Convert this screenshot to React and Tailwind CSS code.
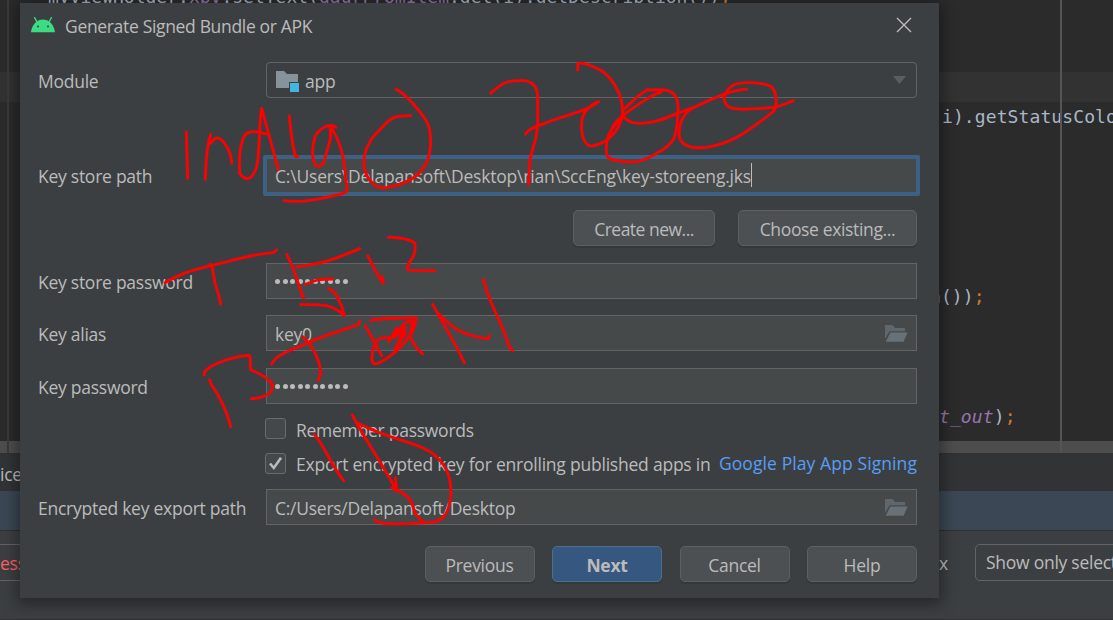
import React from "react";

function CodeLine({ className = "", children }) {
  return (
    <div className={`h-[30px] shrink-0 whitespace-pre leading-[30px] ${className}`}>{children}</div>
  );
}

function Editor() {
  return (
    <div className="relative h-[441px] overflow-hidden bg-[#2b2b2b] font-['DejaVu_Sans_Mono',monospace] text-[18px] tracking-[0.1px] text-[#a9b7c6]">
      <div className="-mt-[18px] flex flex-col">
        <CodeLine className="pl-[48px] tracking-normal">
          myViewHolder.<span className="text-[#9876aa]">xpv</span>.setText(
          <span className="text-[#9876aa]">daurFromItem</span>.get(i).getDescription())
          <span className="text-[#cc7832]">;</span>
        </CodeLine>
        <CodeLine />
        <CodeLine />
        <CodeLine className="bg-[#323232]" />
        <CodeLine className="pl-[942px]">i).getStatusColor</CodeLine>
        <CodeLine />
        <CodeLine />
        <CodeLine />
        <CodeLine />
        <CodeLine />
        <CodeLine className="pl-[930px]">
          n())<span className="text-[#cc7832]">;</span>
        </CodeLine>
        <CodeLine />
        <CodeLine />
        <CodeLine />
        <CodeLine className="pl-[939px]">
          <span className="italic text-[#9876aa]">t_out</span>)
          <span className="text-[#cc7832]">;</span>
        </CodeLine>
      </div>
    </div>
  );
}

function Backdrop() {
  return (
    <div className="flex h-full flex-col">
      <Editor />
      <div className="h-[12px] bg-[#4d4d4d]" />
      <div className="h-[2px] bg-[#323232]" />
      <div className="flex h-[36px] items-center bg-[#313335] pt-[2px]">ice</div>
      <div className="h-[40px] border-b border-[#2d2f30] bg-[#3b4754]" />
      <div className="flex h-[88px] items-start pt-[13px]">
        <div className="flex h-[37px] w-[60px] shrink-0 items-center border-y border-[#646464] pt-px text-[#ff5f5f]">
          ess
        </div>
        <div className="ml-[879px] flex h-[37px] w-[36px] shrink-0 items-center pt-px">x</div>
        <div className="flex h-[37px] w-[200px] shrink-0 items-center rounded-[5px] border border-[#646464] pl-[10px] whitespace-nowrap">
          Show only selected
        </div>
      </div>
      <div className="h-px bg-[#323232]" />
    </div>
  );
}

function AndroidIcon() {
  return (
    <svg className="h-[16px] w-[24px]" viewBox="0 0 24 16">
      <path d="M0 15.3C.5 10 3.500 5 8 3.200Q12 1.600 16 3.200C20.500 5 23.500 10 24 15.300Z" fill="#3ddc84" />
      <path d="M3.600.600 6 5M20.400.600 18 5" stroke="#3ddc84" strokeWidth="1.300" strokeLinecap="round" />
      <circle cx="7" cy="9.500" r="1" fill="#3c3f41" />
      <circle cx="17" cy="9.500" r="1" fill="#3c3f41" />
    </svg>
  );
}

function OpenFolder() {
  return (
    <svg className="h-[17px] w-[23px]" viewBox="0 0 23 17">
      <path d="M0 0H7.500L10 3H20V6.300H4.500L0 14Z" fill="#5f676b" />
      <path d="M5.300 7.500H22.700L18.500 16.700H.700Z" fill="#687176" />
    </svg>
  );
}

function Row({ label, className = "", children }) {
  return (
    <div className={`flex items-center ${className}`}>
      <div className="w-[228px] shrink-0 pt-[2px] whitespace-nowrap">{label}</div>
      {children}
    </div>
  );
}

function Field({ browse, children }) {
  return (
    <div className="flex h-[36px] w-[651px] items-center justify-between border border-[#646464] bg-[#45494a] pr-[8px] pl-[8px]">
      <span className="pt-[2px]">{children}</span>
      {browse && <OpenFolder />}
    </div>
  );
}

function Dots() {
  return (
    <span className="-mt-[2px] flex gap-[2.500px]">
      {Array.from({ length: 10 }, (_, i) => (
        <i key={i} className="size-[5px] rounded-full bg-[#bbbbbb]" />
      ))}
    </span>
  );
}

function Button({ className = "", primary, children }) {
  const tone = primary
    ? "border-[#4c708c] bg-[#365880] font-bold"
    : "border-[#5e6060] bg-[#4c5052]";
  return (
    <button
      className={`flex h-[36px] items-center justify-center rounded-[5px] border pt-[3px] shadow-[0_2px_1px_#35383a] ${tone} ${className}`}
    >
      {children}
    </button>
  );
}

function Checkbox({ checked }) {
  return (
    <span className="mr-[10px] flex size-[21px] items-center justify-center rounded-[3px] border border-[#6b6b6b] bg-[#43494a]">
      {checked && (
        <svg className="size-[15px]" viewBox="0 0 15 15" fill="none">
          <path d="M2 7.500 5.800 12 13 1.800" stroke="#bbbbbb" strokeWidth="2.600" />
        </svg>
      )}
    </span>
  );
}

function Dialog() {
  return (
    <div className="absolute top-[3px] left-[20px] flex h-[595px] w-[919px] flex-col bg-[#3c3f41] pr-[22px] pl-[18px] shadow-[0_3px_14px_3px_rgba(0,0,0,0.4)]">
      <div className="-ml-[7px] flex h-[43px] items-center">
        <AndroidIcon />
        <span className="ml-[10px] pt-[3px] tracking-[-0.33px]">Generate Signed Bundle or APK</span>
        <svg className="mr-[5px] ml-auto size-[16px]" viewBox="0 0 16 16">
          <path d="M1 1 15 15M15 1 1 15" stroke="#bbbbbb" strokeWidth="1.400" />
        </svg>
      </div>

      <Row label="Module" className="mt-[16px] h-[36px]">
        <div className="flex h-[36px] w-[651px] items-center rounded-[4px] border border-[#646464] pr-[10px] pl-[9px]">
          <svg className="mt-[2px] h-[21px] w-[24px]" viewBox="0 0 24 21">
            <path d="M0 0H8L11 3H22V11H13V17H0Z" fill="#87939a" />
            <rect x="14" y="12" width="9" height="9" fill="#40b6e0" />
          </svg>
          <span className="ml-[5px] pt-[2px]">app</span>
          <svg className="ml-auto h-[8px] w-[13px]" viewBox="0 0 13 8">
            <path d="M0 0H13L6.500 8Z" fill="#5b5d5e" />
          </svg>
        </div>
      </Row>

      <Row label="Key store path" className="mt-[56px] h-[42px]">
        <div className="-mx-[3px] flex h-[41px] w-[657px] items-center rounded-[2px] border-4 border-[#3d6185] bg-[#45494a] pl-[8px] whitespace-nowrap">
          <span className="pt-[3px] tracking-[-0.2px]">C:\Users\Delapansoft\Desktop\rian\SccEng\key-storeeng.jks</span>
          <span className="h-[24px] w-px bg-[#bbbbbb]" />
        </div>
      </Row>

      <div className="mt-[14px] flex justify-end gap-[23px]">
        <Button className="w-[142px] tracking-[-0.5px]">Create new...</Button>
        <Button className="w-[179px] tracking-[-0.35px]">Choose existing...</Button>
      </div>

      <Row label="Key store password" className="mt-[17px]">
        <Field><Dots /></Field>
      </Row>
      <Row label="Key alias" className="mt-[16px]">
        <Field browse>key0</Field>
      </Row>
      <Row label="Key password" className="mt-[17px]">
        <Field><Dots /></Field>
      </Row>

      <div className="mt-[13px] ml-[227px] flex h-[22px] items-center">
        <Checkbox />
        <span className="pt-[4px]">Remember passwords</span>
      </div>
      <div className="mt-[13px] ml-[227px] flex h-[22px] items-center whitespace-nowrap">
        <Checkbox checked />
        <span className="pt-[3px] tracking-[-0.22px]">Export encrypted key for enrolling published apps in</span>
        <span className="ml-auto pt-px tracking-[0.09px] text-[#589df6]">Google Play App Signing</span>
      </div>

      <Row label="Encrypted key export path" className="mt-[15px]">
        <Field browse>C:/Users/Delapansoft/Desktop</Field>
      </Row>

      <div className="mt-[21px] flex justify-end gap-[17.500px]">
        <Button className="w-[110px]">Previous</Button>
        <Button primary className="w-[110px]">Next</Button>
        <Button className="w-[110px]">Cancel</Button>
        <Button className="w-[110px]">Help</Button>
      </div>
    </div>
  );
}

/* Freehand pen strokes; each group is drawn at three units per pixel. */
function Ink() {
  return (
    <svg
      className="pointer-events-none absolute inset-0 h-full w-full"
      viewBox="0 0 1113 620"
      fill="none"
      stroke="#ff0000"
      strokeWidth="8.500"
      strokeLinecap="round"
      strokeLinejoin="round"
    >
      <g transform="scale(.33333)">
        <path d="M559 396 563 535" />
        <path d="M632 403C617 450 618 490 616 538M632 430C648 405 662 410 680 440Q693 458 695 490" />
        <path d="M798 402C760 390 735 392 728 420C715 455 718 490 719 520C735 542 755 545 770 500C780 460 776 380 785 325L835 508" />
        <path d="M868 348C873 400 880 450 887 470L894 470" />
        <path d="M1008 382C985 365 955 390 945 410C935 440 935 480 948 497C965 503 972 490 975 475C985 430 997 420 990 378C1020 420 1035 480 1037 540C1045 570 1042 577 1030 580C970 595 910 610 852 602" />
      </g>
      <g transform="translate(340 50) scale(.33333)">
        <path d="M168 118C190 128 215 155 235 180C270 220 272 240 272 280C270 350 235 395 140 413C105 415 105 405 85 385C65 350 70 310 90 275C100 255 115 245 130 228C155 200 165 197 213 197" />
        <path d="M452 130C495 90 510 92 550 92C575 92 592 110 593 140L593 220C590 290 565 310 568 360L566 403" />
        <path d="M556 253C565 235 590 230 640 210C700 190 745 180 776 155C740 170 728 190 725 215C722 260 735 290 758 288C795 280 840 250 848 190C850 130 810 70 770 55C740 40 725 38 714 40L713 60" />
      </g>
      <g transform="translate(560 50) scale(.33333)">
        <path d="M303 127C280 130 235 162 190 195M262 120C240 130 215 155 192 178M188 200C155 235 140 255 139 290C137 320 145 328 165 330C220 342 250 335 290 310C345 280 350 260 353 200C358 150 350 122 310 120L262 120M188 200C210 218 220 220 240 220C300 220 330 195 400 173M190 195C165 215 155 230 148 258" />
        <path d="M560 118C520 118 470 140 400 173C365 190 355 230 358 260C365 290 395 297 440 292C520 280 560 245 640 185C655 165 650 120 630 108C600 95 540 95 520 105C490 125 485 155 505 170C530 182 570 178 640 172C665 168 680 160 700 152" />
      </g>
      <g transform="translate(150 220) scale(.33333)">
        <path d="M45 188C100 155 140 148 180 137C260 120 290 105 370 98L380 90M180 133 186 138 195 190C205 220 210 235 212 252" />
        <path d="M410 103C440 160 445 200 461 235M440 140C520 132 560 115 629 86M467 193C500 178 510 177 549 177M452 254C520 252 550 255 583 287C575 250 555 210 536 206" />
        <path d="M653 107C668 135 680 165 700 190L697 170" />
        <path d="M715 52C750 50 785 60 795 70C796 95 795 105 778 128C768 142 770 150 780 151L855 152" />
        <path d="M365 432C380 400 430 390 480 365C540 340 600 325 627 312L629 303M459 350C490 380 515 430 511 465L504 481" />
        <path d="M162 465C160 440 240 410 298 406C305 420 298 440 303 450C340 465 360 480 368 495C370 525 330 535 304 536M179 480 182 490C210 530 230 570 242 620" />
        <path d="M646 317 695 407M662 301C700 293 740 296 798 293C798 310 790 340 775 352C745 395 700 425 680 431C660 435 665 410 670 385C680 355 690 352 716 352L728 350M716 365 740 325 733 353 766 322 735 390M733 353C750 320 765 303 788 303M735 385 768 338M788 303 780 350 800 385 818 402" />
        <path d="M848 253C885 320 905 350 943 428M865 280C910 330 950 350 1015 356L1020 347M1001 178C1010 230 1040 280 1062 335L1080 385L1088 392" />
      </g>
      <g transform="translate(250 400) scale(.33333)">
        <path d="M193 103C225 140 240 190 281 242M307 45C340 110 390 180 440 272L436 233M440 272 426 263C490 290 485 310 495 340L517 365" />
        <path d="M325 70C420 120 480 120 540 155C600 195 605 250 602 290C595 340 585 360 545 367C470 370 390 380 373 358" />
      </g>
    </svg>
  );
}

export default function App() {
  return (
    <div className="relative h-[620px] w-[1113px] overflow-hidden bg-[#3c3f41] font-['Open_Sans',sans-serif] text-[17.5px] tracking-[-0.26px] text-[#bbbbbb]">
      <Backdrop />
      <div className="absolute top-0 left-[7px] h-[453px] w-[2px] bg-[#3a3a3a]" />
      <div className="absolute top-0 left-[1060px] h-[453px] w-[2px] bg-[#555555]" />
      <Dialog />
      <Ink />
    </div>
  );
}
